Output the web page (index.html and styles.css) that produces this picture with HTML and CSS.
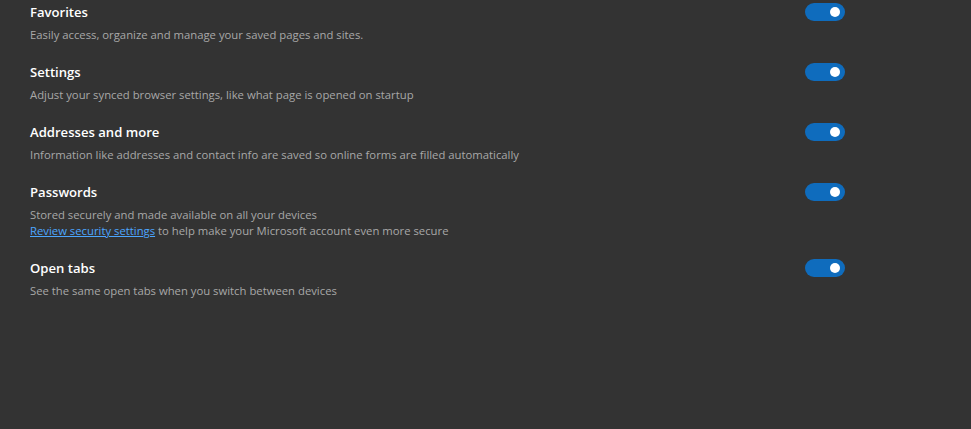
FILE: index.html
```html
<!DOCTYPE html>
<html>
<head>
<meta charset="utf-8">
<link rel="stylesheet" href="styles.css">
</head>
<body>
<div class="list">
  <div class="row">
    <div class="text">
      <div class="title">Favorites</div>
      <div class="desc">Easily access, organize and manage your saved pages and sites.</div>
    </div>
    <div class="toggle"><span class="knob"></span></div>
  </div>
  <div class="row">
    <div class="text">
      <div class="title">Settings</div>
      <div class="desc">Adjust your synced browser settings, like what page is opened on startup</div>
    </div>
    <div class="toggle"><span class="knob"></span></div>
  </div>
  <div class="row">
    <div class="text">
      <div class="title">Addresses and more</div>
      <div class="desc">Information like addresses and contact info are saved so online forms are filled automatically</div>
    </div>
    <div class="toggle"><span class="knob"></span></div>
  </div>
  <div class="row">
    <div class="text">
      <div class="title">Passwords</div>
      <div class="desc">Stored securely and made available on all your devices</div>
      <div class="desc"><a class="link" href="#">Review security settings</a> to help make your Microsoft account even more secure</div>
    </div>
    <div class="toggle"><span class="knob"></span></div>
  </div>
  <div class="row">
    <div class="text">
      <div class="title">Open tabs</div>
      <div class="desc">See the same open tabs when you switch between devices</div>
    </div>
    <div class="toggle"><span class="knob"></span></div>
  </div>
</div>
</body>
</html>
```
FILE: styles.css
```css
html, body {
  margin: 0;
  padding: 0;
  background: #333333;
  height: 100%;
}
body {
  font-family: "Open Sans", "Noto Sans", sans-serif;
}
.list {
  display: flex;
  flex-direction: column;
  gap: 19px;
  padding: 2px 0 0 30px;
  width: 815px;
}
.row {
  display: flex;
  justify-content: space-between;
  align-items: flex-start;
}
.title {
  color: #ffffff;
  font-size: 13.1px;
  font-weight: 600;
  line-height: 20px;
  margin-bottom: 5px;
}
.desc {
  color: #a8a8a8;
  font-size: 11.3px;
  line-height: 16px;
}
.link {
  color: #4ca6ff;
  text-decoration: underline;
}
.toggle {
  width: 40px;
  height: 18px;
  margin-top: 1px;
  border-radius: 9px;
  background: #0f6cbd;
  display: flex;
  align-items: center;
  justify-content: flex-end;
  padding-right: 5px;
  box-sizing: border-box;
}
.knob {
  width: 10px;
  height: 10px;
  border-radius: 50%;
  background: #ffffff;
}
```
